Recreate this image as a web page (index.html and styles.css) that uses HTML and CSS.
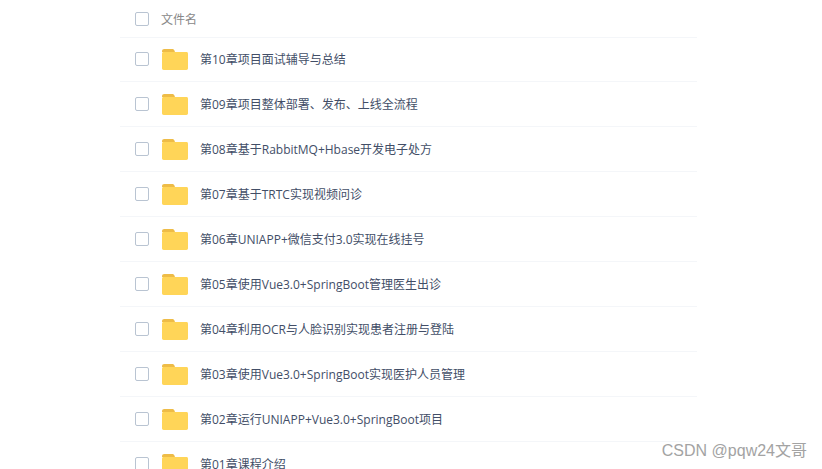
FILE: index.html
```html
<html>

<head>
    <title>文件列表</title>
    <meta charset="utf-8">
    <link rel="stylesheet" href="styles.css">
</head>

<body>
    <svg class="iconDefs" width="0" height="0">
        <symbol id="folder" viewBox="0 0 26 21">
            <path d="M0 2.200C0 .9 1 0 2.200 0H10C11.200 0 11.800 .5 12.300 1.200L13 3H0Z" fill="#eebc47" />
            <path d="M1.500 3H24.500C25.400 3 26 3.600 26 4.500V19.300C26 20.300 25.300 21 24.300 21H1.700C.7 21 0 20.300 0 19.300V4.500C0 3.600 .6 3 1.500 3Z" fill="#ffd558" />
        </symbol>
    </svg>

    <div class="fileList">
        <div class="headerRow">
            <span class="checkBox"></span>
            <span class="headerName">文件名</span>
        </div>
        <div class="fileRow">
            <span class="checkBox"></span>
            <svg class="folderIcon"><use href="#folder" /></svg>
            <span class="fileName">第10章项目面试辅导与总结</span>
        </div>
        <div class="fileRow">
            <span class="checkBox"></span>
            <svg class="folderIcon"><use href="#folder" /></svg>
            <span class="fileName">第09章项目整体部署、发布、上线全流程</span>
        </div>
        <div class="fileRow">
            <span class="checkBox"></span>
            <svg class="folderIcon"><use href="#folder" /></svg>
            <span class="fileName">第08章基于RabbitMQ+Hbase开发电子处方</span>
        </div>
        <div class="fileRow">
            <span class="checkBox"></span>
            <svg class="folderIcon"><use href="#folder" /></svg>
            <span class="fileName">第07章基于TRTC实现视频问诊</span>
        </div>
        <div class="fileRow">
            <span class="checkBox"></span>
            <svg class="folderIcon"><use href="#folder" /></svg>
            <span class="fileName">第06章UNIAPP+微信支付3.0实现在线挂号</span>
        </div>
        <div class="fileRow">
            <span class="checkBox"></span>
            <svg class="folderIcon"><use href="#folder" /></svg>
            <span class="fileName">第05章使用Vue3.0+SpringBoot管理医生出诊</span>
        </div>
        <div class="fileRow">
            <span class="checkBox"></span>
            <svg class="folderIcon"><use href="#folder" /></svg>
            <span class="fileName">第04章利用OCR与人脸识别实现患者注册与登陆</span>
        </div>
        <div class="fileRow">
            <span class="checkBox"></span>
            <svg class="folderIcon"><use href="#folder" /></svg>
            <span class="fileName">第03章使用Vue3.0+SpringBoot实现医护人员管理</span>
        </div>
        <div class="fileRow">
            <span class="checkBox"></span>
            <svg class="folderIcon"><use href="#folder" /></svg>
            <span class="fileName">第02章运行UNIAPP+Vue3.0+SpringBoot项目</span>
        </div>
        <div class="fileRow">
            <span class="checkBox"></span>
            <svg class="folderIcon"><use href="#folder" /></svg>
            <span class="fileName">第01章课程介绍</span>
        </div>
    </div>

    <div class="waterMark">CSDN @pqw24文哥</div>
</body>

</html>
```

FILE: styles.css
```css
html, body {
    height: 100%;
    overflow: hidden;
}

body {
    margin: 0px;
    background-color: white;
    font-family: "Open Sans", "Noto Sans CJK SC", sans-serif;
    font-size: 12px;
}

.iconDefs {
    position: absolute;
}

.fileList {
    width: 577px;
    margin-left: 120px;
}

.headerRow {
    display: flex;
    align-items: center;
    box-sizing: border-box;
    height: 38px;
    margin-bottom: -1px;
    padding-left: 15px;
    border-bottom: 1px solid #f4f6f9;
}

.headerName {
    margin-left: 12px;
    color: #888;
}

.fileRow {
    display: flex;
    align-items: center;
    box-sizing: border-box;
    height: 45px;
    padding-left: 15px;
    border-bottom: 1px solid #f4f6f9;
}

.checkBox {
    box-sizing: border-box;
    flex: none;
    width: 14px;
    height: 14px;
    border: 1px solid #b9c4d2;
    border-radius: 2px;
    background-color: white;
}

.folderIcon {
    flex: none;
    width: 26px;
    height: 21px;
    margin-top: 1px;
    margin-left: 13px;
}

.fileName {
    margin-top: 2px;
    margin-left: 12px;
    color: #424e67;
    line-height: 16px;
}

.waterMark {
    position: absolute;
    right: 15px;
    bottom: 8px;
    color: #a3a3a3;
    font-family: "Liberation Sans", "Noto Sans CJK SC", sans-serif;
    font-size: 16px;
}
```
